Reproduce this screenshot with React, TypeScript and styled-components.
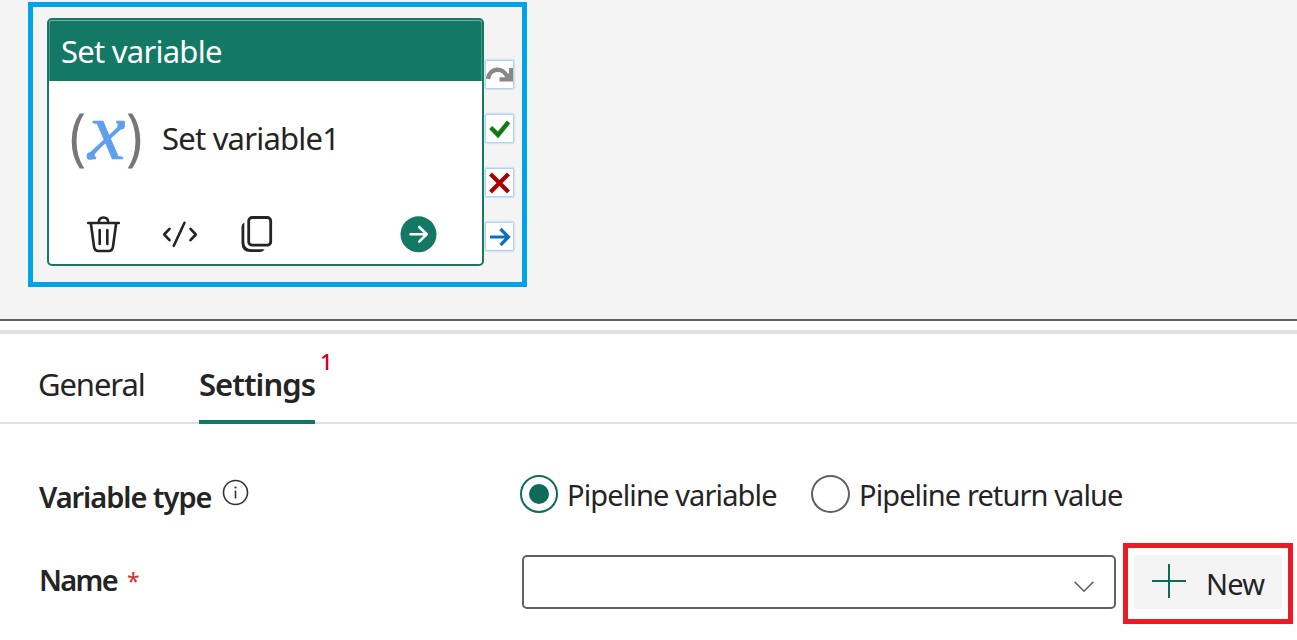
import React from 'react';
import styled, { createGlobalStyle } from 'styled-components';

const GlobalStyle = createGlobalStyle`
  * { box-sizing: border-box; }
  html, body { margin: 0; padding: 0; background: #ffffff; overflow: hidden; }
  body { font-family: "Noto Sans", "Open Sans", sans-serif; color: #242424; }
  button { font: inherit; color: inherit; border: 0; padding: 0; background: none; }
`;

const Page = styled.div`
  width: 1297px;
  height: 640px;
  display: flex;
  flex-direction: column;
`;

const Text = styled.span<{ $size: number; $spacing?: number; $weight?: number; $color?: string }>`
  font-size: ${p => p.$size}px;
  letter-spacing: ${p => p.$spacing ?? 0}px;
  font-weight: ${p => p.$weight ?? 400};
  color: ${p => p.$color ?? '#242424'};
  line-height: 40px;
  white-space: nowrap;
`;

const Canvas = styled.section`
  height: 321px;
  padding: 2px 0 0 28px;
  background: #f4f4f4;
  border-bottom: 2px solid #616161;
`;

const Selection = styled.div`
  width: 499px;
  height: 285px;
  border: 5px solid #00a2e8;
  padding: 11px 0 0 14px;
  display: flex;
  align-items: flex-start;
`;

const Card = styled.article`
  width: 437px;
  height: 248px;
  border: 2px solid #137864;
  border-radius: 5px;
  background: #ffffff;
`;

const CardHeader = styled.header`
  height: 61px;
  padding: 11px 0 0 12px;
  background: #137864;
  border-radius: 3px 3px 0 0;
  box-shadow: inset 0 1px #72aea2, inset 1px 0 #4b9687, inset -1px 0 #4b9687;
  display: flex;
`;

const CardBody = styled.div`
  height: 183px;
  padding: 30px 0 0 21px;
  display: flex;
  flex-direction: column;
`;

const Activity = styled.div`
  height: 60px;
  display: flex;
  align-items: flex-start;
  gap: 20px;
  & > span { margin-top: 7px; }
`;

const Actions = styled.div`
  margin-top: 43px;
  padding-left: 15px;
  display: flex;
  align-items: center;
  height: 40px;
`;

const IconButton = styled.button<{ $width: number; $gap?: number }>`
  width: ${p => p.$width}px;
  height: 40px;
  margin-right: ${p => p.$gap ?? 0}px;
  svg { display: block; }
`;

const Ports = styled.div`
  margin: 43px 0 0 2px;
  display: flex;
  flex-direction: column;
  gap: 27px;
`;

const Port = styled.div`
  width: 27px;
  height: 27px;
  background: #ffffff;
  box-shadow: 0 0 2px 1px #8fc3f0;
  svg { display: block; }
`;

const Panel = styled.section`
  margin-top: 9px;
  border-top: 4px solid #e0e0e0;
`;

const TabBar = styled.nav`
  height: 90px;
  padding-left: 38px;
  display: flex;
  gap: 54px;
  box-shadow: inset 0 -2px #e0e0e0;
`;

const Tab = styled.div<{ $width: number; $active?: boolean }>`
  position: relative;
  width: ${p => p.$width}px;
  height: 90px;
  padding-top: 30px;
  border-bottom: 4px solid ${p => (p.$active ? '#117865' : 'transparent')};
`;

const Badge = styled.span`
  position: absolute;
  left: 121px;
  top: 7px;
  font-size: 22px;
  font-weight: 500;
  line-height: 40px;
  color: #d00025;
`;

const Row = styled.div<{ $height: number; $top: number }>`
  height: ${p => p.$height}px;
  margin-top: ${p => p.$top}px;
  padding-left: 39px;
  display: flex;
  align-items: flex-start;
`;

const Label = styled.label<{ $width: number; $top: number }>`
  width: ${p => p.$width}px;
  padding-top: ${p => p.$top}px;
  display: flex;
  align-items: flex-start;
  svg { display: block; margin: 2px 0 0 11px; }
`;

const Required = styled.span`
  margin: 1px 0 0 10px;
  font-size: 23px;
  line-height: 40px;
  color: #d13438;
`;

const Option = styled.label<{ $width: number }>`
  width: ${p => p.$width}px;
  display: flex;
  gap: 9px;
`;

const Radio = styled.span<{ $checked?: boolean }>`
  flex: none;
  width: ${p => (p.$checked ? 38 : 39)}px;
  height: 38px;
  border-radius: 50%;
  border: 2px solid ${p => (p.$checked ? '#0e6b5a' : '#616161')};
  display: grid;
  place-items: center;
  &::after {
    content: '';
    width: 20px;
    height: 20px;
    border-radius: 50%;
    background: ${p => (p.$checked ? '#0e6b5a' : 'transparent')};
  }
`;

const Select = styled.div`
  width: 594px;
  height: 54px;
  margin-top: 12px;
  padding: 10px 20px 0 0;
  border: 2px solid #616161;
  border-radius: 5px;
  display: flex;
  align-items: center;
  justify-content: flex-end;
`;

const Highlight = styled.div`
  width: 170px;
  height: 81px;
  margin-left: 7px;
  padding: 7px 6px 10px;
  border: 5px solid #ed1c24;
`;

const NewButton = styled.button`
  width: 148px;
  height: 54px;
  padding: 9px 0 0 18px;
  background: #f4f4f4;
  display: flex;
  align-items: flex-start;
  gap: 20px;
`;

const VariableMark = styled.svg`
  display: block;
  overflow: visible;
`;

const VariableIcon = () => (
  <VariableMark width="72" height="60" viewBox="70 111 72 60">
    <path d="M79.700 113.500h4.600q-7.800 12-7.800 27.500t7.800 27.500h-4.600q-8-12-8-27.500t8-27.500Z" fill="#777" />
    <path d="M132.300 113.500h-4.600q7.800 12 7.800 27.500t-7.800 27.500h4.600q8-12 8-27.500t-8-27.500Z" fill="#777" />
    <text x="88.500" y="158.800" fontFamily="'Liberation Serif', serif" fontStyle="italic" fontSize="83" fill="#5ea0ef" stroke="#5ea0ef" strokeWidth="0.600">x</text>
    <circle cx="121.200" cy="125.700" r="3.700" fill="#5ea0ef" />
    <circle cx="90.300" cy="156" r="3.700" fill="#5ea0ef" />
  </VariableMark>
);

const TrashIcon = () => (
  <svg width="36" height="40" viewBox="85 214 36 40" fill="none" stroke="#242424" strokeWidth="2.600" strokeLinecap="round">
    <path d="M88.200 223h30.600M90.800 223l3.200 23.500q.6 4.500 4.500 4.500h10q3.900 0 4.500-4.500l3.200-23.500M98.800 222.500q0-5 4.700-5t4.700 5M99.700 230v14M107.300 230v14" />
  </svg>
);

const CodeIcon = () => (
  <svg width="36" height="40" viewBox="162 214 36 40" fill="none" stroke="#242424" strokeWidth="2.600" strokeLinecap="round" strokeLinejoin="round">
    <path d="M169.500 228.800l-5.300 5.700 5.300 5.700M190.500 228.800l5.300 5.700-5.300 5.700M184.500 222.800l-10.700 23" />
  </svg>
);

const CopyIcon = () => (
  <svg width="34" height="40" viewBox="240 214 34 40" fill="none" stroke="#242424" strokeWidth="2.800" strokeLinecap="round">
    <rect x="248.700" y="217.500" width="22" height="27.700" rx="3.500" />
    <path d="M241.500 227q0-3 2.800-4.400v19.400q0 7.300 7.300 7.300h13q-1.300 2.600-4.500 2.600h-9.600q-9 0-9-9Z" fill="#242424" stroke="none" />
  </svg>
);

const RunIcon = () => (
  <svg width="38" height="40" viewBox="400 214 38 40" fill="none">
    <circle cx="418.500" cy="234.300" r="18" fill="#137864" />
    <path d="M410.500 234.300h16M419.200 227l7.500 7.300-7.500 7.300" stroke="#fff" strokeWidth="2.600" strokeLinecap="round" strokeLinejoin="round" />
  </svg>
);

const InfoIcon = () => (
  <svg width="27" height="27" viewBox="0 0 27 27" fill="none">
    <circle cx="13.500" cy="13.500" r="12" stroke="#333" strokeWidth="1.600" />
    <path d="M13.500 11.500v8" stroke="#333" strokeWidth="1.600" />
    <circle cx="13.500" cy="8.500" r="1.100" fill="#333" />
  </svg>
);

export default function App() {
  return (
    <>
      <GlobalStyle />
      <Page>
        <Canvas>
          <Selection>
            <Card>
              <CardHeader>
                <Text $size={31} $spacing={-0.75} $color="#fff">Set variable</Text>
              </CardHeader>
              <CardBody>
                <Activity>
                  <VariableIcon />
                  <Text $size={31} $spacing={-0.78}>Set variable1</Text>
                </Activity>
                <Actions>
                  <IconButton $width={36} $gap={41} aria-label="Delete"><TrashIcon /></IconButton>
                  <IconButton $width={36} $gap={42} aria-label="View code"><CodeIcon /></IconButton>
                  <IconButton $width={34} $gap={126} aria-label="Clone"><CopyIcon /></IconButton>
                  <IconButton $width={38} aria-label="Run"><RunIcon /></IconButton>
                </Actions>
              </CardBody>
            </Card>
            <Ports>
              <Port>
                <svg width="27" height="27" viewBox="0 0 27 27">
                  <path d="M2 18C3.500 6.500 17 5.500 21.500 16" fill="none" stroke="#8a8886" strokeWidth="4.400" />
                  <path d="M27 7v13.500H13.500v-4.300h5.500L23 12V7Z" fill="#8a8886" />
                </svg>
              </Port>
              <Port>
                <svg width="27" height="27" viewBox="0 0 27 27" fill="none" stroke="#107c10" strokeWidth="4.400">
                  <path d="M4.700 12.500l7.300 7.400L22.500 7" />
                </svg>
              </Port>
              <Port>
                <svg width="27" height="27" viewBox="0 0 27 27" fill="none" stroke="#a80000" strokeWidth="4.200">
                  <path d="M4.500 5l18 18M22.500 5l-18 18" />
                </svg>
              </Port>
              <Port>
                <svg width="27" height="27" viewBox="0 0 27 27" fill="none" stroke="#106ebe" strokeWidth="3.200">
                  <path d="M4 14h18.500M14.500 6l8 8-8 8" />
                </svg>
              </Port>
            </Ports>
          </Selection>
        </Canvas>
        <Panel>
          <TabBar>
            <Tab $width={107}><Text $size={31} $spacing={-1.1}>General</Text></Tab>
            <Tab $width={116} $active>
              <Text $size={31} $weight={600} $spacing={-0.95}>Settings</Text>
              <Badge>1</Badge>
            </Tab>
          </TabBar>
          <Row $top={51} $height={39}>
            <Label $width={481} $top={2}>
              <Text $size={29} $weight={600} $spacing={-1.05}>Variable type</Text>
              <InfoIcon />
            </Label>
            <Option $width={291}>
              <Radio $checked />
              <Text $size={29} $spacing={-0.87}>Pipeline variable</Text>
            </Option>
            <Option $width={330}>
              <Radio />
              <Text $size={29} $spacing={-0.9}>Pipeline return value</Text>
            </Option>
          </Row>
          <Row $top={29} $height={81}>
            <Label $width={483} $top={17}>
              <Text $size={29} $weight={600} $spacing={-1.7}>Name</Text>
              <Required>*</Required>
            </Label>
            <Select>
              <svg width="20" height="12" viewBox="0 0 20 12" fill="none" stroke="#616161" strokeWidth="1.600">
                <path d="M.7.900L10 10.200 19.300.900" />
              </svg>
            </Select>
            <Highlight>
              <NewButton>
                <svg width="34" height="34" viewBox="0 0 34 34" stroke="#0e6b5a" strokeWidth="2">
                  <path d="M17 0v34M0 17h34" />
                </svg>
                <Text $size={29} $spacing={-0.8}>New</Text>
              </NewButton>
            </Highlight>
          </Row>
        </Panel>
      </Page>
    </>
  );
}
